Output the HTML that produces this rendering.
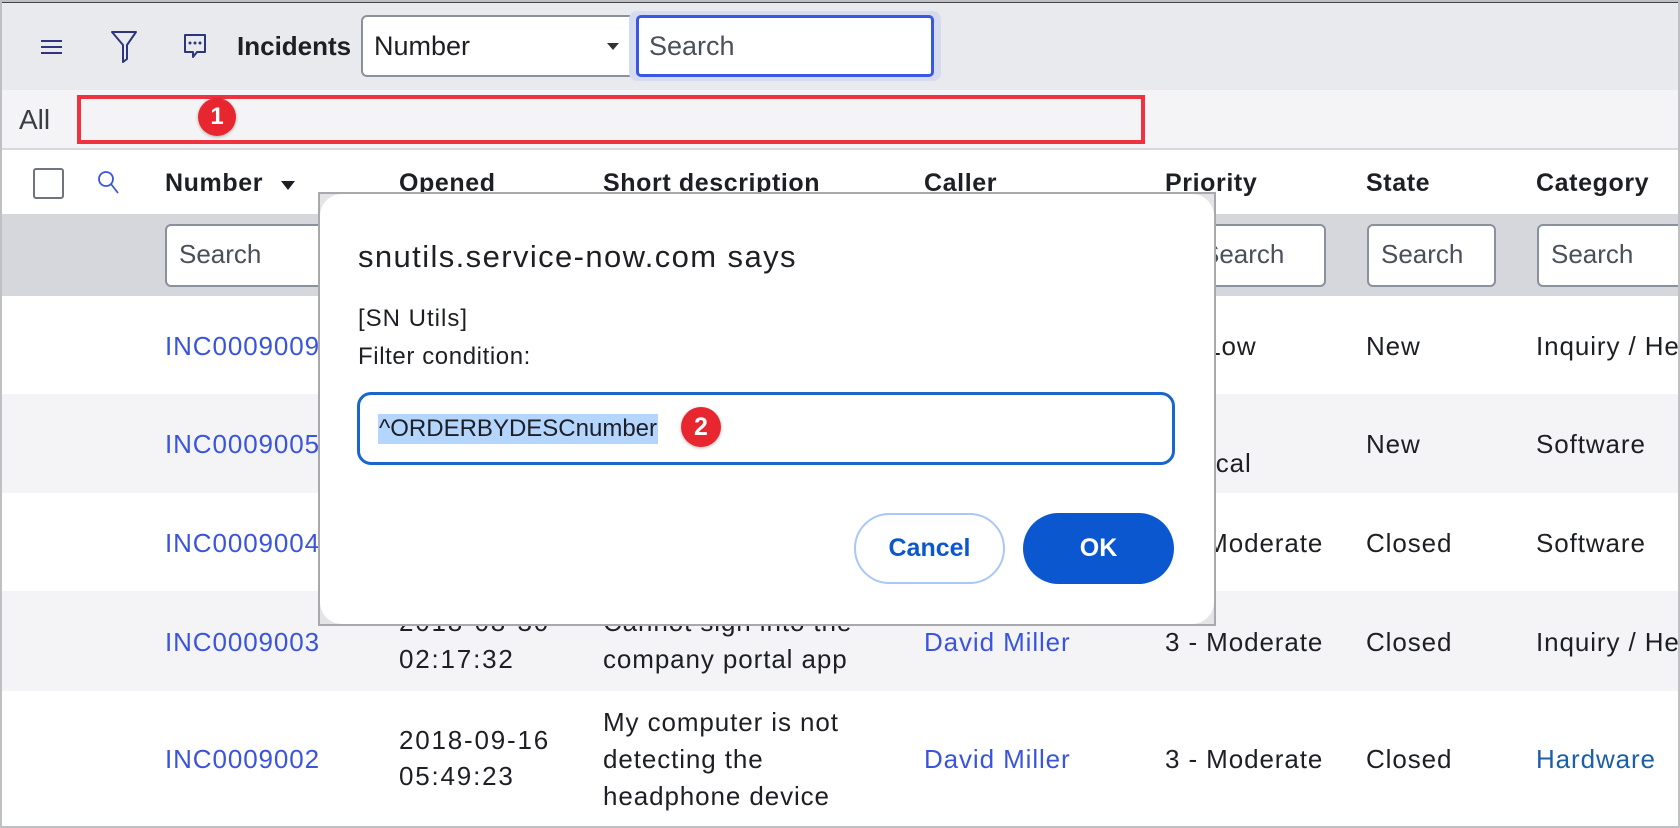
<!DOCTYPE html>
<html><head><meta charset="utf-8"><style>
*{box-sizing:border-box;margin:0;padding:0}
body{width:1680px;height:828px;overflow:hidden;font-family:"Liberation Sans",sans-serif;color:#1d1f24;background:#fff;position:relative}
.a{position:absolute;white-space:nowrap}
.hd{font-weight:bold;font-size:25px;letter-spacing:0.6px}
.t{font-size:26px;letter-spacing:0.9px}
.d{font-size:26px;letter-spacing:1.8px}
.lk{color:#3a55dc}
.sb{position:absolute;height:63px;border:2px solid #8a909c;border-radius:6px;background:#fff;font-size:26px;color:#4a4f5a;padding:13px 12px}
</style></head><body>
<div class="a" style="left:0;top:0;width:1680px;height:828px;border:2px solid #bfc0c4;z-index:50;pointer-events:none"></div>
<div class="a" style="left:0;top:0;width:1680px;height:3px;background:#444"></div>
<div class="a" style="left:0;top:3px;width:1680px;height:87px;background:#e9eaee"></div>
<svg class="a" style="left:40px;top:38px" width="24" height="18"><path d="M1 3h21M1 9h21M1 15h21" stroke="#2e3580" stroke-width="2"/></svg>
<svg class="a" style="left:110px;top:30px" width="30" height="34"><path d="M2 2h24L17 15v14l-4 3V15z" fill="none" stroke="#2e3580" stroke-width="2" stroke-linejoin="round"/></svg>
<svg class="a" style="left:182px;top:33px" width="26" height="28"><path d="M3 2h20v17H15l-4 5v-5H3z" fill="none" stroke="#2e3580" stroke-width="2" stroke-linejoin="round"/><circle cx="8" cy="10" r="1.5" fill="#2e3580"/><circle cx="13" cy="10" r="1.5" fill="#2e3580"/><circle cx="18" cy="10" r="1.5" fill="#2e3580"/></svg>
<div class="a" style="left:237px;top:31px;font-weight:bold;font-size:26px">Incidents</div>
<div class="a" style="left:361px;top:15px;width:276px;height:62px;border:2px solid #8a909c;border-radius:6px 0 0 6px;background:#fff;font-size:27px;padding:14px 11px">Number</div>
<div class="a" style="left:607px;top:43px;width:0;height:0;border-left:6px solid transparent;border-right:6px solid transparent;border-top:7px solid #333"></div>
<div class="a" style="left:629px;top:11px;width:312px;height:70px;background:#d6dbf0;border-radius:8px"></div>
<div class="a" style="left:636px;top:15px;width:298px;height:62px;border:3px solid #3957e6;border-radius:5px;background:#fff;font-size:27px;color:#4a4f5a;padding:13px 10px">Search</div>
<div class="a" style="left:0;top:90px;width:1680px;height:60px;background:#f4f4f6;border-bottom:2px solid #d8d9dd"></div>
<div class="a" style="left:19px;top:104px;font-size:28px;color:#3a3d45">All</div>
<div class="a" style="left:77px;top:95px;width:1068px;height:49px;border:4px solid #f0313f"></div>
<div class="a" style="left:198px;top:98px;width:38px;height:38px;border-radius:50%;background:#e8262f;color:#fff;font-weight:bold;font-size:24px;text-align:center;line-height:38px;box-shadow:0 1px 3px rgba(0,0,0,.3)">1</div>
<div class="a" style="left:33px;top:168px;width:31px;height:31px;border:2px solid #6f7480;border-radius:3px"></div>
<svg class="a" style="left:97px;top:170px" width="24" height="26"><circle cx="9" cy="9" r="7" fill="none" stroke="#3a55dc" stroke-width="1.8"/><path d="M14 14l7 9" stroke="#3a55dc" stroke-width="1.8"/></svg>
<div class="a hd" style="left:165px;top:169px">Number</div>
<div class="a" style="left:281px;top:181px;border-left:7px solid transparent;border-right:7px solid transparent;border-top:9px solid #1d1f24"></div>
<div class="a hd" style="left:399px;top:169px">Opened</div>
<div class="a hd" style="left:603px;top:169px">Short description</div>
<div class="a hd" style="left:924px;top:169px">Caller</div>
<div class="a hd" style="left:1165px;top:169px">Priority</div>
<div class="a hd" style="left:1366px;top:169px">State</div>
<div class="a hd" style="left:1536px;top:169px">Category</div>
<div class="a" style="left:0;top:214px;width:1680px;height:82px;background:#d6d7dc"></div>
<div class="sb" style="left:165px;top:224px;width:170px">Search</div>
<div class="sb" style="left:1170px;top:224px;width:156px;padding-left:30px">Search</div>
<div class="sb" style="left:1367px;top:224px;width:129px">Search</div>
<div class="sb" style="left:1537px;top:224px;width:160px">Search</div>
<div class="a" style="left:0;top:394px;width:1680px;height:99px;background:#f4f4f6"></div>
<div class="a" style="left:0;top:591px;width:1680px;height:100px;background:#f4f4f6"></div>
<div class="a t lk" style="left:165px;top:331px">INC0009009</div>
<div class="a t" style="left:1165px;top:331px">4 - Low</div>
<div class="a t" style="left:1366px;top:331px">New</div>
<div class="a t" style="left:1536px;top:331px">Inquiry / Help</div>
<div class="a t lk" style="left:165px;top:429px">INC0009005</div>
<div class="a t" style="left:1165px;top:411px">1 -</div>
<div class="a t" style="left:1165px;top:448px">Critical</div>
<div class="a t" style="left:1366px;top:429px">New</div>
<div class="a t" style="left:1536px;top:429px">Software</div>
<div class="a t lk" style="left:165px;top:528px">INC0009004</div>
<div class="a t" style="left:1165px;top:528px">3 - Moderate</div>
<div class="a t" style="left:1366px;top:528px">Closed</div>
<div class="a t" style="left:1536px;top:528px">Software</div>
<div class="a t lk" style="left:165px;top:627px">INC0009003</div>
<div class="a d" style="left:399px;top:607px">2018-08-30</div>
<div class="a d" style="left:399px;top:644px">02:17:32</div>
<div class="a t" style="left:603px;top:607px">Cannot sign into the</div>
<div class="a t" style="left:603px;top:644px">company portal app</div>
<div class="a t lk" style="left:924px;top:627px">David Miller</div>
<div class="a t" style="left:1165px;top:627px">3 - Moderate</div>
<div class="a t" style="left:1366px;top:627px">Closed</div>
<div class="a t" style="left:1536px;top:627px">Inquiry / Help</div>
<div class="a t lk" style="left:165px;top:744px">INC0009002</div>
<div class="a d" style="left:399px;top:725px">2018-09-16</div>
<div class="a d" style="left:399px;top:761px">05:49:23</div>
<div class="a t" style="left:603px;top:707px">My computer is not</div>
<div class="a t" style="left:603px;top:744px">detecting the</div>
<div class="a t" style="left:603px;top:781px">headphone device</div>
<div class="a t lk" style="left:924px;top:744px">David Miller</div>
<div class="a t" style="left:1165px;top:744px">3 - Moderate</div>
<div class="a t" style="left:1366px;top:744px">Closed</div>
<div class="a t" style="left:1536px;top:744px;color:#1a5fa8">Hardware</div>
<div class="a" style="left:318px;top:192px;width:898px;height:434px;border:2px solid #a9a9ad;background:#e4e4e6"></div>
<div class="a" style="left:320px;top:194px;width:894px;height:430px;background:#fff;border-radius:22px"></div>
<div class="a" style="left:358px;top:239px;font-size:31px;letter-spacing:1.4px;color:#1d1f24">snutils.service-now.com says</div>
<div class="a" style="left:358px;top:305px;font-size:24px;letter-spacing:1px">[SN Utils]</div>
<div class="a" style="left:358px;top:343px;font-size:24px;letter-spacing:0.6px">Filter condition:</div>
<div class="a" style="left:357px;top:392px;width:818px;height:73px;border:3px solid #1a66cc;border-radius:14px"></div>
<div class="a" style="left:378px;top:414px;background:#b4d5fe;font-size:24px;padding:1px 1px">^ORDERBYDESCnumber</div>
<div class="a" style="left:681px;top:407px;width:40px;height:40px;border-radius:50%;background:#e8262f;color:#fff;font-weight:bold;font-size:25px;text-align:center;line-height:40px;box-shadow:0 1px 3px rgba(0,0,0,.3)">2</div>
<div class="a" style="left:854px;top:513px;width:151px;height:71px;border:2px solid #a9c8f5;border-radius:36px;color:#0b57d0;font-weight:bold;font-size:25px;text-align:center;line-height:67px">Cancel</div>
<div class="a" style="left:1023px;top:513px;width:151px;height:71px;background:#0b57d0;border-radius:36px;color:#fff;font-weight:bold;font-size:25px;text-align:center;line-height:71px">OK</div>
</body></html>
